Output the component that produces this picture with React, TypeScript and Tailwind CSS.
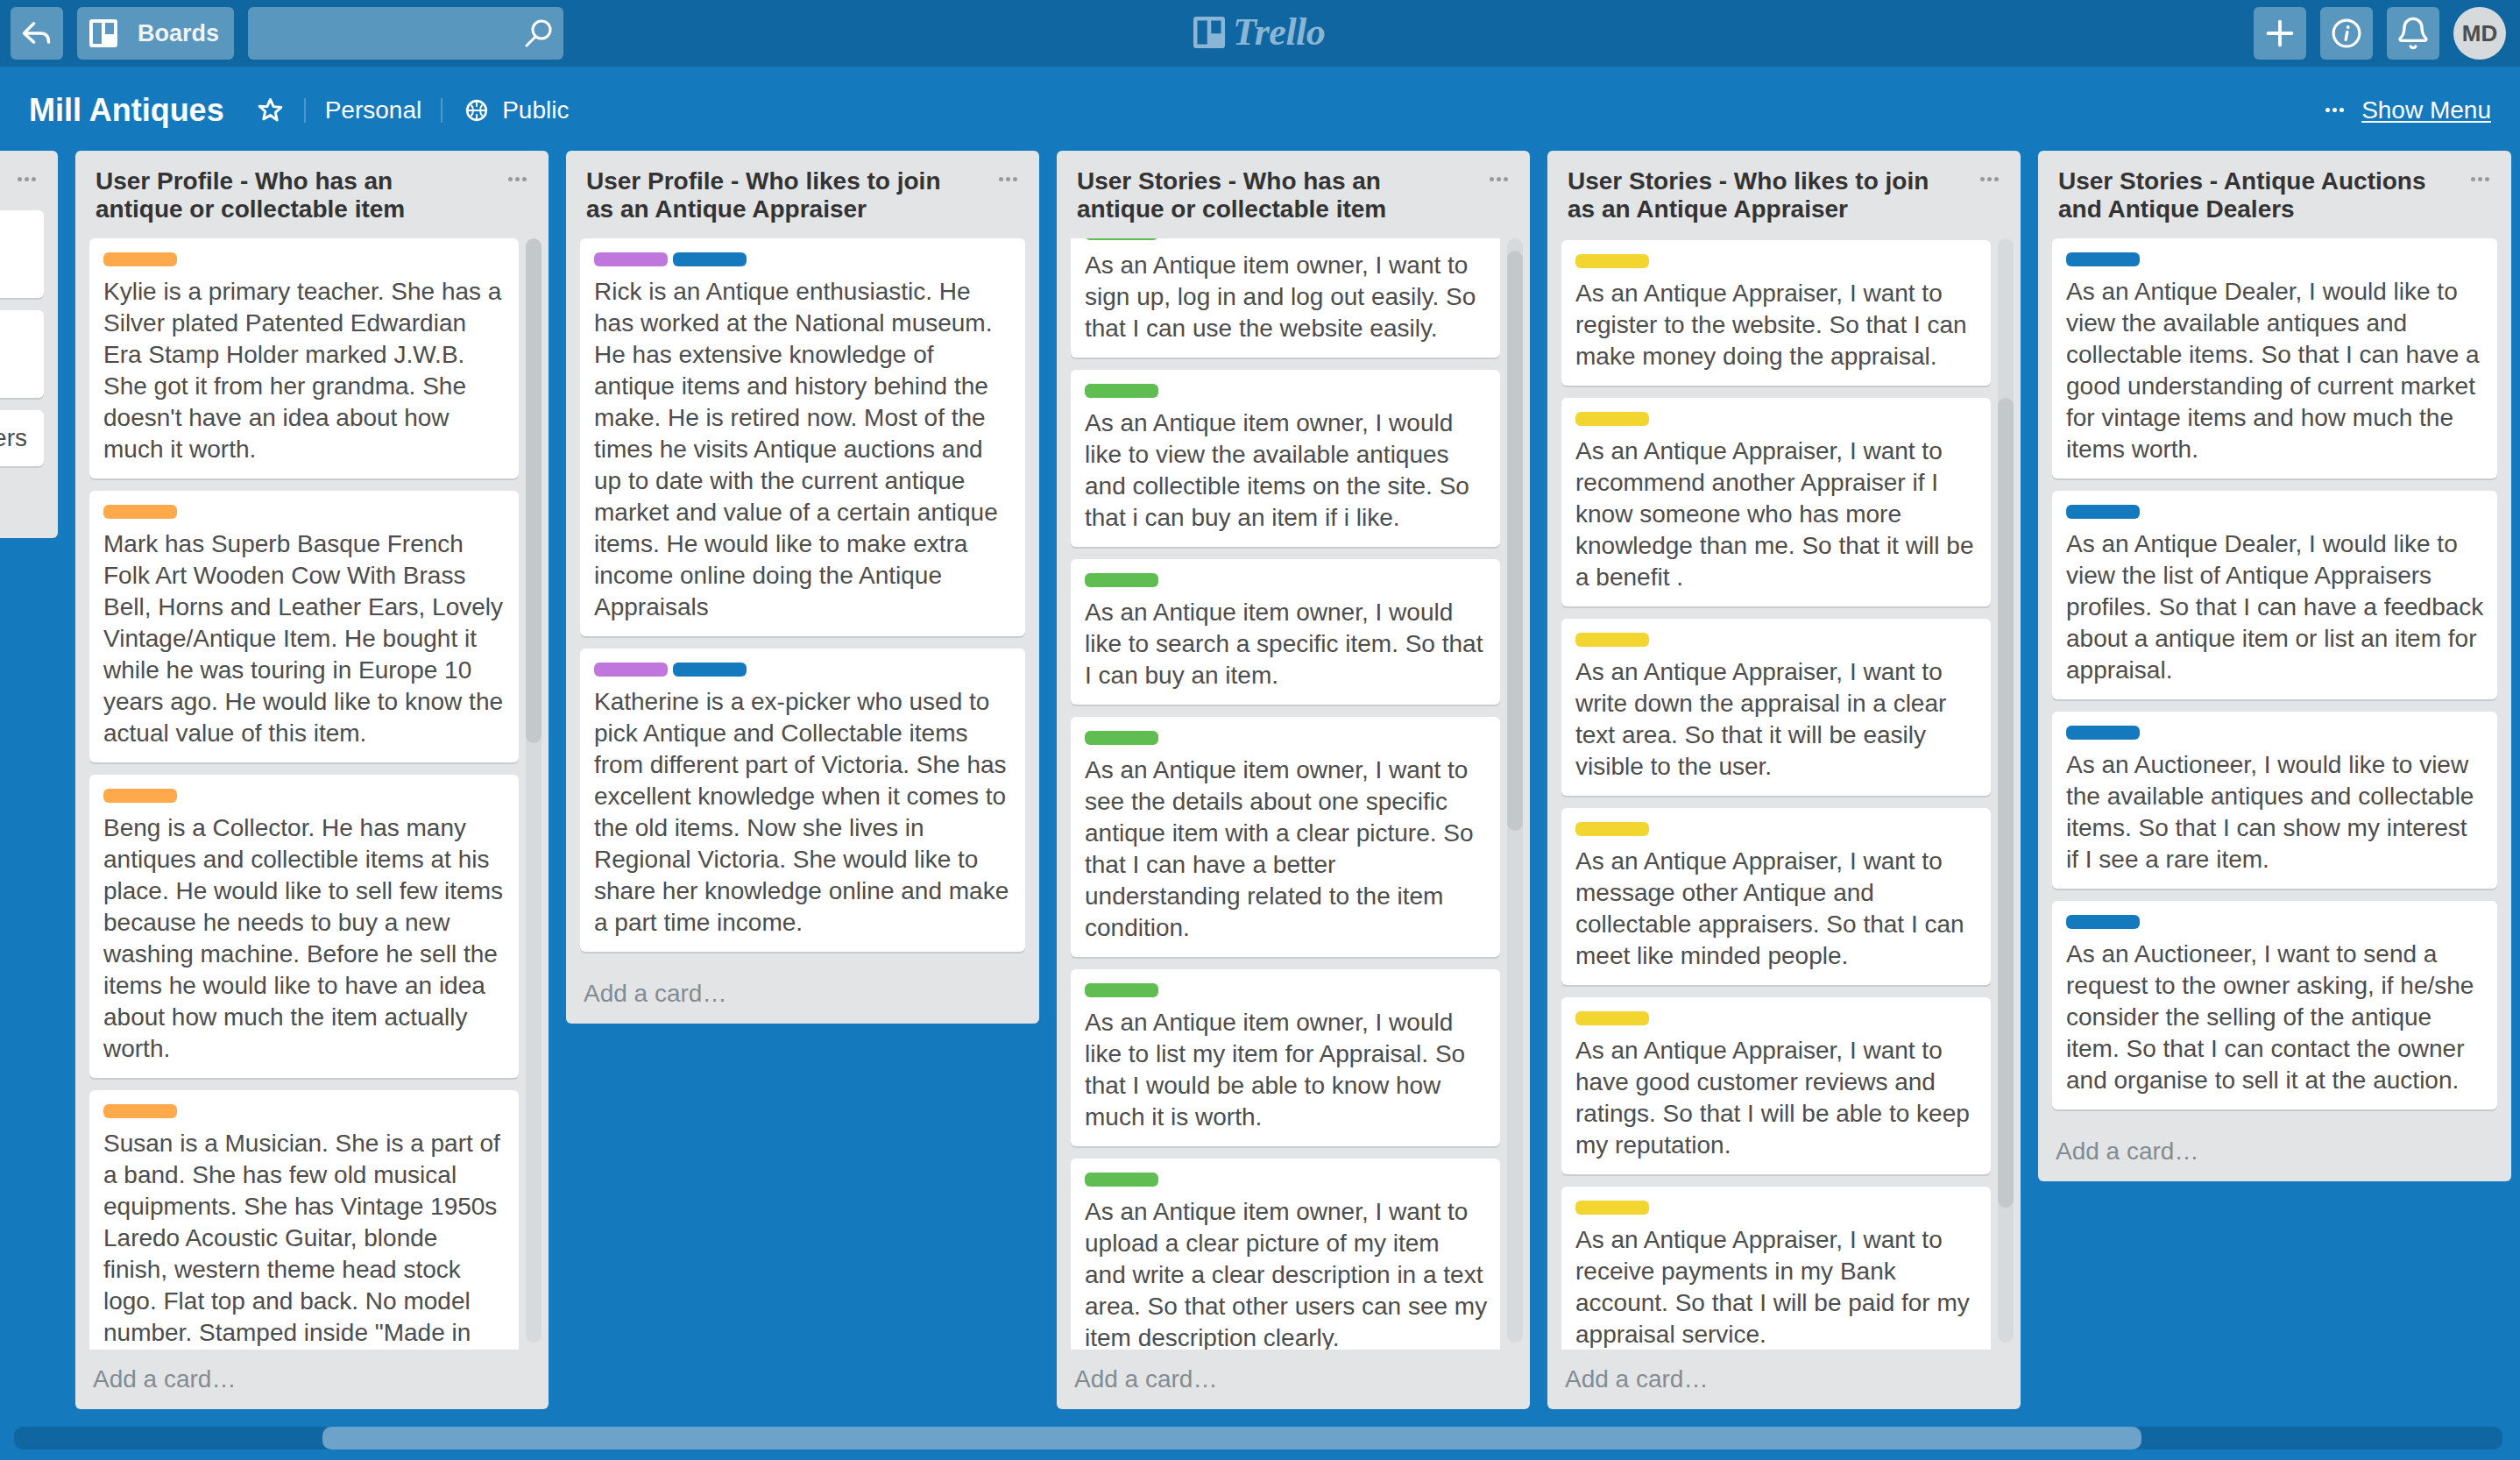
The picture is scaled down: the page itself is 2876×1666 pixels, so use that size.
import { Bell, Plus } from 'lucide-react'

type CardData = { labels?: string[]; text: string; rightAlign?: boolean }

type ListData = {
  title: string
  cards: CardData[]
  // full class names, taken from what the list is scrolled to
  scrollClass?: string
  thumbClass?: string
  heightClass?: string
}

const orange = 'bg-[#ffa94d]'
const purple = 'bg-[#c077dd]'
const blue = 'bg-[#1579be]'
const green = 'bg-[#5fbd52]'
const yellow = 'bg-[#f2d531]'

const lists: ListData[] = [
  {
    // scrolled almost out of view, only the right end of it shows
    title: '\u00a0',
    cards: [
      { text: '\u00a0\n\u00a0' },
      { text: '\u00a0\n\u00a0' },
      { text: 'Appraisers', rightAlign: true },
    ],
  },
  {
    title: 'User Profile - Who has an\nantique or collectable item',
    heightClass: 'h-[1436px]',
    thumbClass: 'h-[576px]',
    cards: [
      {
        labels: [orange],
        text: "Kylie is a primary teacher. She has a\nSilver plated Patented Edwardian\nEra Stamp Holder marked J.W.B.\nShe got it from her grandma. She\ndoesn't have an idea about how\nmuch it worth.",
      },
      {
        labels: [orange],
        text: 'Mark has Superb Basque French\nFolk Art Wooden Cow With Brass\nBell, Horns and Leather Ears, Lovely\nVintage/Antique Item. He bought it\nwhile he was touring in Europe 10\nyears ago. He would like to know the\nactual value of this item.',
      },
      {
        labels: [orange],
        text: 'Beng is a Collector. He has many\nantiques and collectible items at his\nplace. He would like to sell few items\nbecause he needs to buy a new\nwashing machine. Before he sell the\nitems he would like to have an idea\nabout how much the item actually\nworth.',
      },
      {
        labels: [orange],
        text: 'Susan is a Musician. She is a part of\na band. She has few old musical\nequipments. She has Vintage 1950s\nLaredo Acoustic Guitar, blonde\nfinish, western theme head stock\nlogo. Flat top and back. No model\nnumber. Stamped inside "Made in',
      },
    ],
  },
  {
    title: 'User Profile - Who likes to join\nas an Antique Appraiser',
    cards: [
      {
        labels: [purple, blue],
        text: 'Rick is an Antique enthusiastic. He\nhas worked at the National museum.\nHe has extensive knowledge of\nantique items and history behind the\nmake. He is retired now. Most of the\ntimes he visits Antique auctions and\nup to date with the current antique\nmarket and value of a certain antique\nitems. He would like to make extra\nincome online doing the Antique\nAppraisals',
      },
      {
        labels: [purple, blue],
        text: 'Katherine is a ex-picker who used to\npick Antique and Collectable items\nfrom different part of Victoria. She has\nexcellent knowledge when it comes to\nthe old items. Now she lives in\nRegional Victoria. She would like to\nshare her knowledge online and make\na part time income.',
      },
    ],
  },
  {
    title: 'User Stories - Who has an\nantique or collectable item',
    heightClass: 'h-[1436px]',
    scrollClass: 'mt-[-30px]',
    thumbClass: 'mt-[14px] h-[662px]',
    cards: [
      {
        labels: [green],
        text: 'As an Antique item owner, I want to\nsign up, log in and log out easily. So\nthat I can use the website easily.',
      },
      {
        labels: [green],
        text: 'As an Antique item owner, I would\nlike to view the available antiques\nand collectible items on the site. So\nthat i can buy an item if i like.',
      },
      {
        labels: [green],
        text: 'As an Antique item owner, I would\nlike to search a specific item. So that\nI can buy an item.',
      },
      {
        labels: [green],
        text: 'As an Antique item owner, I want to\nsee the details about one specific\nantique item with a clear picture. So\nthat I can have a better\nunderstanding related to the item\ncondition.',
      },
      {
        labels: [green],
        text: 'As an Antique item owner, I would\nlike to list my item for Appraisal. So\nthat I would be able to know how\nmuch it is worth.',
      },
      {
        labels: [green],
        text: 'As an Antique item owner, I want to\nupload a clear picture of my item\nand write a clear description in a text\narea. So that other users can see my\nitem description clearly.',
      },
    ],
  },
  {
    title: 'User Stories - Who likes to join\nas an Antique Appraiser',
    heightClass: 'h-[1436px]',
    scrollClass: 'mt-[2px]',
    thumbClass: 'mt-[182px] h-[924px]',
    cards: [
      {
        labels: [yellow],
        text: 'As an Antique Appraiser, I want to\nregister to the website. So that I can\nmake money doing the appraisal.',
      },
      {
        labels: [yellow],
        text: 'As an Antique Appraiser, I want to\nrecommend another Appraiser if I\nknow someone who has more\nknowledge than me. So that it will be\na benefit .',
      },
      {
        labels: [yellow],
        text: 'As an Antique Appraiser, I want to\nwrite down the appraisal in a clear\ntext area. So that it will be easily\nvisible to the user.',
      },
      {
        labels: [yellow],
        text: 'As an Antique Appraiser, I want to\nmessage other Antique and\ncollectable appraisers. So that I can\nmeet like minded people.',
      },
      {
        labels: [yellow],
        text: 'As an Antique Appraiser, I want to\nhave good customer reviews and\nratings. So that I will be able to keep\nmy reputation.',
      },
      {
        labels: [yellow],
        text: 'As an Antique Appraiser, I want to\nreceive payments in my Bank\naccount. So that I will be paid for my\nappraisal service.',
      },
    ],
  },
  {
    title: 'User Stories - Antique Auctions\nand Antique Dealers',
    cards: [
      {
        labels: [blue],
        text: 'As an Antique Dealer, I would like to\nview the available antiques and\ncollectable items. So that I can have a\ngood understanding of current market\nfor vintage items and how much the\nitems worth.',
      },
      {
        labels: [blue],
        text: 'As an Antique Dealer, I would like to\nview the list of Antique Appraisers\nprofiles. So that I can have a feedback\nabout a antique item or list an item for\nappraisal.',
      },
      {
        labels: [blue],
        text: 'As an Auctioneer, I would like to view\nthe available antiques and collectable\nitems. So that I can show my interest\nif I see a rare item.',
      },
      {
        labels: [blue],
        text: 'As an Auctioneer, I want to send a\nrequest to the owner asking, if he/she\nconsider the selling of the antique\nitem. So that I can contact the owner\nand organise to sell it at the auction.',
      },
    ],
  },
]

const BoardsGlyph = ({ className }: { className: string }) => (
  <svg viewBox="0 0 32 32" className={className} fill="currentColor" fillRule="evenodd">
    <path d="M3 0h26a3 3 0 0 1 3 3v26a3 3 0 0 1-3 3H3a3 3 0 0 1-3-3V3a3 3 0 0 1 3-3zM4 4v24h10V4zM18 4v13h10V4z" />
  </svg>
)

const Dots = ({ className }: { className: string }) => (
  <div className={`flex gap-[3px] ${className}`}>
    <span className="size-[5px] rounded-full bg-current" />
    <span className="size-[5px] rounded-full bg-current" />
    <span className="size-[5px] rounded-full bg-current" />
  </div>
)

const HeaderButton = ({ children, className = '' }: { children: React.ReactNode; className?: string }) => (
  <div className={`flex h-[60px] items-center justify-center rounded-[6px] bg-[#5a97bf] text-white ${className}`}>
    {children}
  </div>
)

const Card = ({ card }: { card: CardData }) => (
  <div className="shrink-0 rounded-[6px] bg-white px-[16px] shadow-[0_2px_0_#c9cccf]">
    {card.labels ? (
      <div className="flex gap-[6px] pb-[11px] pt-[16px]">
        {card.labels.map((label, i) => (
          <span key={i} className={`h-[16px] w-[84px] rounded-[6px] ${label}`} />
        ))}
      </div>
    ) : (
      <div className="h-[14px]" />
    )}
    <p
      className={`whitespace-pre text-[28px] leading-[36px] text-[#4d4d4d] ${
        card.labels ? 'pb-[15px]' : 'pb-[14px]'
      } ${card.rightAlign ? 'pr-[3px] text-right' : ''}`}
    >
      {card.text}
    </p>
  </div>
)

const List = ({ list }: { list: ListData }) => (
  <section className={`flex w-[540px] shrink-0 flex-col rounded-[6px] bg-[#e2e4e6] ${list.heightClass ?? ''}`}>
    <div className="flex items-start justify-between pb-[17px] pl-[23px] pr-[25px] pt-[19px]">
      <h2 className="whitespace-pre text-[28px] font-bold leading-[32px] text-[#333]">{list.title}</h2>
      <Dots className="mt-[11px] text-[#999]" />
    </div>
    <div className="flex min-h-0 flex-1 items-start overflow-hidden pl-[16px]">
      <div className={`flex min-w-0 flex-col gap-[14px] pb-[14px] ${list.thumbClass ? 'w-[490px]' : 'w-[508px]'} ${list.scrollClass ?? ''}`}>
        {list.cards.map((card, i) => (
          <Card key={i} card={card} />
        ))}
      </div>
      {list.thumbClass && (
        <div className="ml-[8px] h-[1260px] w-[18px] shrink-0 overflow-hidden rounded-[9px] bg-[#d6dadc]">
          <div className={`w-[18px] rounded-[9px] bg-[#c3c9cb] ${list.thumbClass}`} />
        </div>
      )}
    </div>
    <div className="flex h-[68px] shrink-0 items-center pl-[20px] text-[28px] text-[#838c91]">Add a card…</div>
  </section>
)

export default function App() {
  return (
    <div className="flex h-[1666px] w-[2876px] flex-col overflow-hidden bg-[#1579be] font-['Liberation_Sans',Arial,sans-serif]">
      {/* Top bar */}
      <header className="flex h-[76px] shrink-0 items-center bg-[#0f66a1] pl-[12px] pr-[16px]">
        <HeaderButton className="w-[60px]">
          <svg viewBox="0 0 32 32" className="size-[36px]" fill="none" stroke="currentColor" strokeWidth="3" strokeLinecap="round" strokeLinejoin="round">
            <path d="M13 6 3 16l10 9" />
            <path d="M4 16h16c5 0 8 3 8 9" />
          </svg>
        </HeaderButton>
        <HeaderButton className="ml-[16px] w-[179px] justify-start pl-[14px]">
          <BoardsGlyph className="size-[32px]" />
          <span className="ml-[23px] text-[27px] font-bold text-[#f0f2f4]">Boards</span>
        </HeaderButton>
        <HeaderButton className="ml-[16px] w-[360px] justify-end pr-[12px]">
          <svg viewBox="0 0 32 32" className="size-[32px]" fill="none" stroke="currentColor" strokeWidth="3" strokeLinecap="round">
            <circle cx="19" cy="12" r="10" />
            <path d="M12 20 2 30" />
          </svg>
        </HeaderButton>
        <div className="flex flex-1 items-center pb-[2px] pl-[719px] text-[#8ab5d4]">
          <BoardsGlyph className="size-[36px]" />
          <span className="ml-[9px] font-['Liberation_Serif',serif] text-[44px] font-bold italic leading-[42px] tracking-[-0.5px]">Trello</span>
        </div>
        <HeaderButton className="w-[60px]">
          <Plus className="size-[46px]" strokeWidth={2} />
        </HeaderButton>
        <HeaderButton className="ml-[16px] w-[60px]">
          <svg viewBox="0 0 32 32" className="size-[34px]" fill="none" stroke="currentColor" strokeWidth="3" strokeLinecap="round">
            <circle cx="16" cy="16" r="14" />
            <path d="M16.8 14.5 15.2 23" strokeWidth="3.2" />
            <circle cx="17.6" cy="9.5" r="1.9" fill="currentColor" stroke="none" />
          </svg>
        </HeaderButton>
        <HeaderButton className="ml-[16px] w-[60px]">
          <Bell className="size-[40px]" strokeWidth={2} />
        </HeaderButton>
        <div className="ml-[16px] flex size-[60px] items-center justify-center rounded-full bg-[#d6dadc] text-[26px] font-bold text-[#4d4d4d]">
          MD
        </div>
      </header>

      {/* Board title row */}
      <div className="flex h-[96px] shrink-0 items-center pl-[33px] pr-[33px] pt-[3px] text-white">
        <h1 className="text-[36px] font-bold leading-[44px]">Mill Antiques</h1>
        <svg viewBox="0 0 24 24" className="ml-[38px] size-[29px]" fill="none" stroke="currentColor" strokeWidth="2.4" strokeLinejoin="round">
          <path d="m12 2 3 6.8 7.3.7-5.5 4.9 1.6 7.2L12 17l-6.4 3.6 1.6-7.2-5.5-4.9L9 8.8z" />
        </svg>
        <span className="ml-[24px] h-[28px] w-[2px] bg-[#4c97cc]" />
        <span className="ml-[22px] text-[28px]">Personal</span>
        <span className="ml-[22px] h-[28px] w-[2px] bg-[#4c97cc]" />
        <svg viewBox="0 0 24 24" className="ml-[26px] size-[26px]" fill="none" stroke="currentColor" strokeWidth="2.4">
          <circle cx="12" cy="12" r="10" />
          <path d="M2 12h20M12 2v6M12 16v6M6 6c3 3 3 9 0 12M18 6c-3 3-3 9 0 12" strokeWidth="1.8" />
        </svg>
        <span className="ml-[16px] text-[28px]">Public</span>
        <Dots className="ml-auto text-white" />
        <span className="ml-[20px] text-[28px] underline underline-offset-[3px]">Show Menu</span>
      </div>

      {/* Lists */}
      <main className="ml-[-474px] flex h-[1436px] shrink-0 items-start gap-[20px]">
        {lists.map((list, i) => (
          <List key={i} list={list} />
        ))}
      </main>

      {/* Board scrollbar */}
      <div className="ml-[16px] mt-[20px] h-[26px] w-[2840px] shrink-0 rounded-[10px] bg-[#0f66a1]">
        <div className="ml-[352px] h-[26px] w-[2076px] rounded-[10px] bg-[#6da3c8]" />
      </div>
    </div>
  )
}
